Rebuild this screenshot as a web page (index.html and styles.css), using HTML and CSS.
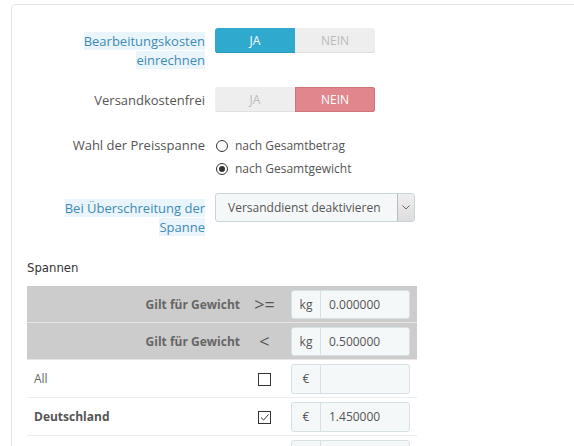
FILE: index.html
```html
<!DOCTYPE html>
<html lang="de">
<head>
<meta charset="utf-8">
<title>Versand</title>
<link rel="stylesheet" href="styles.css">
</head>
<body>
<div class="panel">
  <div class="row row-1">
    <div class="lbl lbl-tip"><span class="tip">Bearbeitungskosten einrechnen</span></div>
    <div class="switch">
      <span class="sw sw-yes on">JA</span>
      <span class="sw sw-no">NEIN</span>
    </div>
  </div>

  <div class="row row-2">
    <div class="lbl">Versandkostenfrei</div>
    <div class="switch">
      <span class="sw sw-yes">JA</span>
      <span class="sw sw-no on-red">NEIN</span>
    </div>
  </div>

  <div class="row row-3">
    <div class="lbl">Wahl der Preisspanne</div>
    <div class="radios">
      <div class="radio"><span class="rb"></span>nach Gesamtbetrag</div>
      <div class="radio"><span class="rb checked"></span>nach Gesamtgewicht</div>
    </div>
  </div>

  <div class="row row-4">
    <div class="lbl lbl-tip lbl-sel"><span class="tip">Bei Überschreitung der Spanne</span></div>
    <div class="select">
      <span class="sel-text">Versanddienst deaktivieren</span>
      <span class="sel-arrow"><svg width="8" height="5" viewBox="0 0 8 5"><path d="M0.5 0.5 L4 4 L7.5 0.5" fill="none" stroke="#666" stroke-width="1"/></svg></span>
    </div>
  </div>

  <h4 class="spannen">Spannen</h4>

  <table class="ranges">
    <colgroup><col class="c1"><col class="c2"><col class="c3"></colgroup>
    <tr class="head">
      <td class="hl">Gilt für Gewicht</td>
      <td class="op">&gt;=</td>
      <td class="inp"><div class="ig"><span class="addon">kg</span><span class="val">0.000000</span></div></td>
    </tr>
    <tr class="head">
      <td class="hl">Gilt für Gewicht</td>
      <td class="op">&lt;</td>
      <td class="inp"><div class="ig"><span class="addon">kg</span><span class="val">0.500000</span></div></td>
    </tr>
    <tr class="body">
      <td class="zone">All</td>
      <td class="cb"><span class="box"></span></td>
      <td class="inp"><div class="ig"><span class="addon">€</span><span class="val"></span></div></td>
    </tr>
    <tr class="body">
      <td class="zone bold">Deutschland</td>
      <td class="cb"><span class="box"><svg width="11" height="11" viewBox="0 0 11 11"><path d="M2 5.5 L4.6 8 L9.5 2.5" fill="none" stroke="#333" stroke-width="1"/></svg></span></td>
      <td class="inp"><div class="ig"><span class="addon">€</span><span class="val">1.450000</span></div></td>
    </tr>
    <tr class="body">
      <td class="zone"></td>
      <td class="cb"></td>
      <td class="inp"><div class="ig"><span class="addon"></span><span class="val"></span></div></td>
    </tr>
  </table>
</div>
</body>
</html>
```

FILE: styles.css
```css
html, body {
  margin: 0;
  padding: 0;
  background: #fff;
  overflow: hidden;
}
body {
  font-family: "Open Sans", "Liberation Sans", sans-serif;
  font-size: 12px;
  color: #555;
}
.panel {
  margin: 4px -20px 0 11px;
  border: 1px solid #e2e2e2;
  border-radius: 5px;
  padding: 23px 0 0 14px;
  min-height: 500px;
}
.row {
  display: flex;
  align-items: flex-start;
}
.lbl {
  width: 179px;
  padding-right: 10px;
  text-align: right;
  line-height: 19px;
  padding-top: 4px;
  font-size: 13px;
}
.lbl-tip { color: #3e8bb5; }
.tip { background: #eaf5fb; }
.lbl-sel { padding-top: 6px; }
.row-1 { margin-bottom: 17px; }
.row-2 { margin-bottom: 20px; }
.row-3 { margin-bottom: 15px; }
.row-4 { margin-bottom: 0; }

.switch {
  display: flex;
  width: 160px;
  height: 25px;
}
.sw {
  flex: 1;
  display: flex;
  align-items: center;
  justify-content: center;
  background: #eeeeee;
  color: #bbbbbb;
  font-size: 12px;
  box-shadow: inset 0 -1px 0 #e0e0e0;
}
.sw-yes { border-radius: 3px 0 0 3px; }
.sw-no { border-radius: 0 3px 3px 0; }
.sw.on {
  background: #30a9cf;
  color: #fff;
  box-shadow: inset 0 -1px 0 #2a98bb;
}
.sw.on-red {
  background: #e0868c;
  color: #fff;
  box-shadow: inset 0 0 0 1px #d27379;
}

.radios { font-size: 12px; }
.radio {
  display: flex;
  align-items: center;
  padding-top: 4px;
  height: 19px;
  line-height: 19px;
}
.rb {
  width: 10px;
  height: 10px;
  border: 1px solid #333;
  border-radius: 50%;
  margin: 0 7px 0 1px;
  position: relative;
  box-sizing: content-box;
}
.rb.checked::after {
  content: "";
  position: absolute;
  left: 2px;
  top: 2px;
  width: 6px;
  height: 6px;
  border-radius: 50%;
  background: #333;
}

.select {
  display: flex;
  width: 198px;
  height: 27px;
  border: 1px solid #c7d6db;
  border-radius: 3px;
  background: #f5f8f9;
  font-size: 12px;
}
.sel-text {
  flex: 1;
  padding-left: 12px;
  line-height: 27px;
  color: #555;
}
.sel-arrow {
  width: 16px;
  display: flex;
  align-items: center;
  justify-content: center;
  border-left: 1px solid #bbb;
  background: linear-gradient(#eee, #ddd);
  border-radius: 0 2px 2px 0;
}

.spannen {
  font-family: "DejaVu Sans Condensed", "DejaVu Sans", sans-serif;
  font-stretch: condensed;
  font-weight: normal;
  font-size: 13px;
  color: #333;
  margin: 22px 0 0 1px;
  padding-bottom: 9px;
  line-height: 18px;
}

.ranges {
  border-collapse: collapse;
  table-layout: fixed;
  width: 390px;
  margin-left: 1px;
}
.c1 { width: 218px; }
.c2 { width: 39px; }
.c3 { width: 133px; }
.ranges td { padding: 0; }
.head td {
  background: #cccccc;
  height: 36px;
  border-bottom: 1px solid #e6e6e6;
}
.head .hl {
  text-align: right;
  padding-right: 5px;
  font-weight: bold;
  color: #666;
  font-size: 12px;
}
.head .op {
  text-align: center;
  font-size: 18px;
  color: #555;
}
.body td {
  height: 37px;
  border-bottom: 1px solid #eaedef;
}
.zone {
  padding-left: 7px !important;
  color: #666;
  font-size: 12px;
}
.zone.bold { font-weight: bold; color: #555; }
.cb { text-align: center; }
.box {
  display: inline-flex;
  align-items: center;
  justify-content: center;
  width: 11px;
  height: 11px;
  border: 1px solid #333;
  background: #fff;
  vertical-align: middle;
}
.inp { padding: 0 7px !important; }
.ig {
  display: flex;
  height: 27px;
  border: 1px solid #d6e1e5;
  border-radius: 3px;
  background: #f5f8f9;
  font-size: 12px;
  color: #555;
}
.body .ig { height: 28px; }
.addon {
  width: 28px;
  border-right: 1px solid #d6e1e5;
  display: flex;
  align-items: center;
  justify-content: center;
  color: #555;
}
.val {
  flex: 1;
  padding-left: 8px;
  display: flex;
  align-items: center;
}
```
